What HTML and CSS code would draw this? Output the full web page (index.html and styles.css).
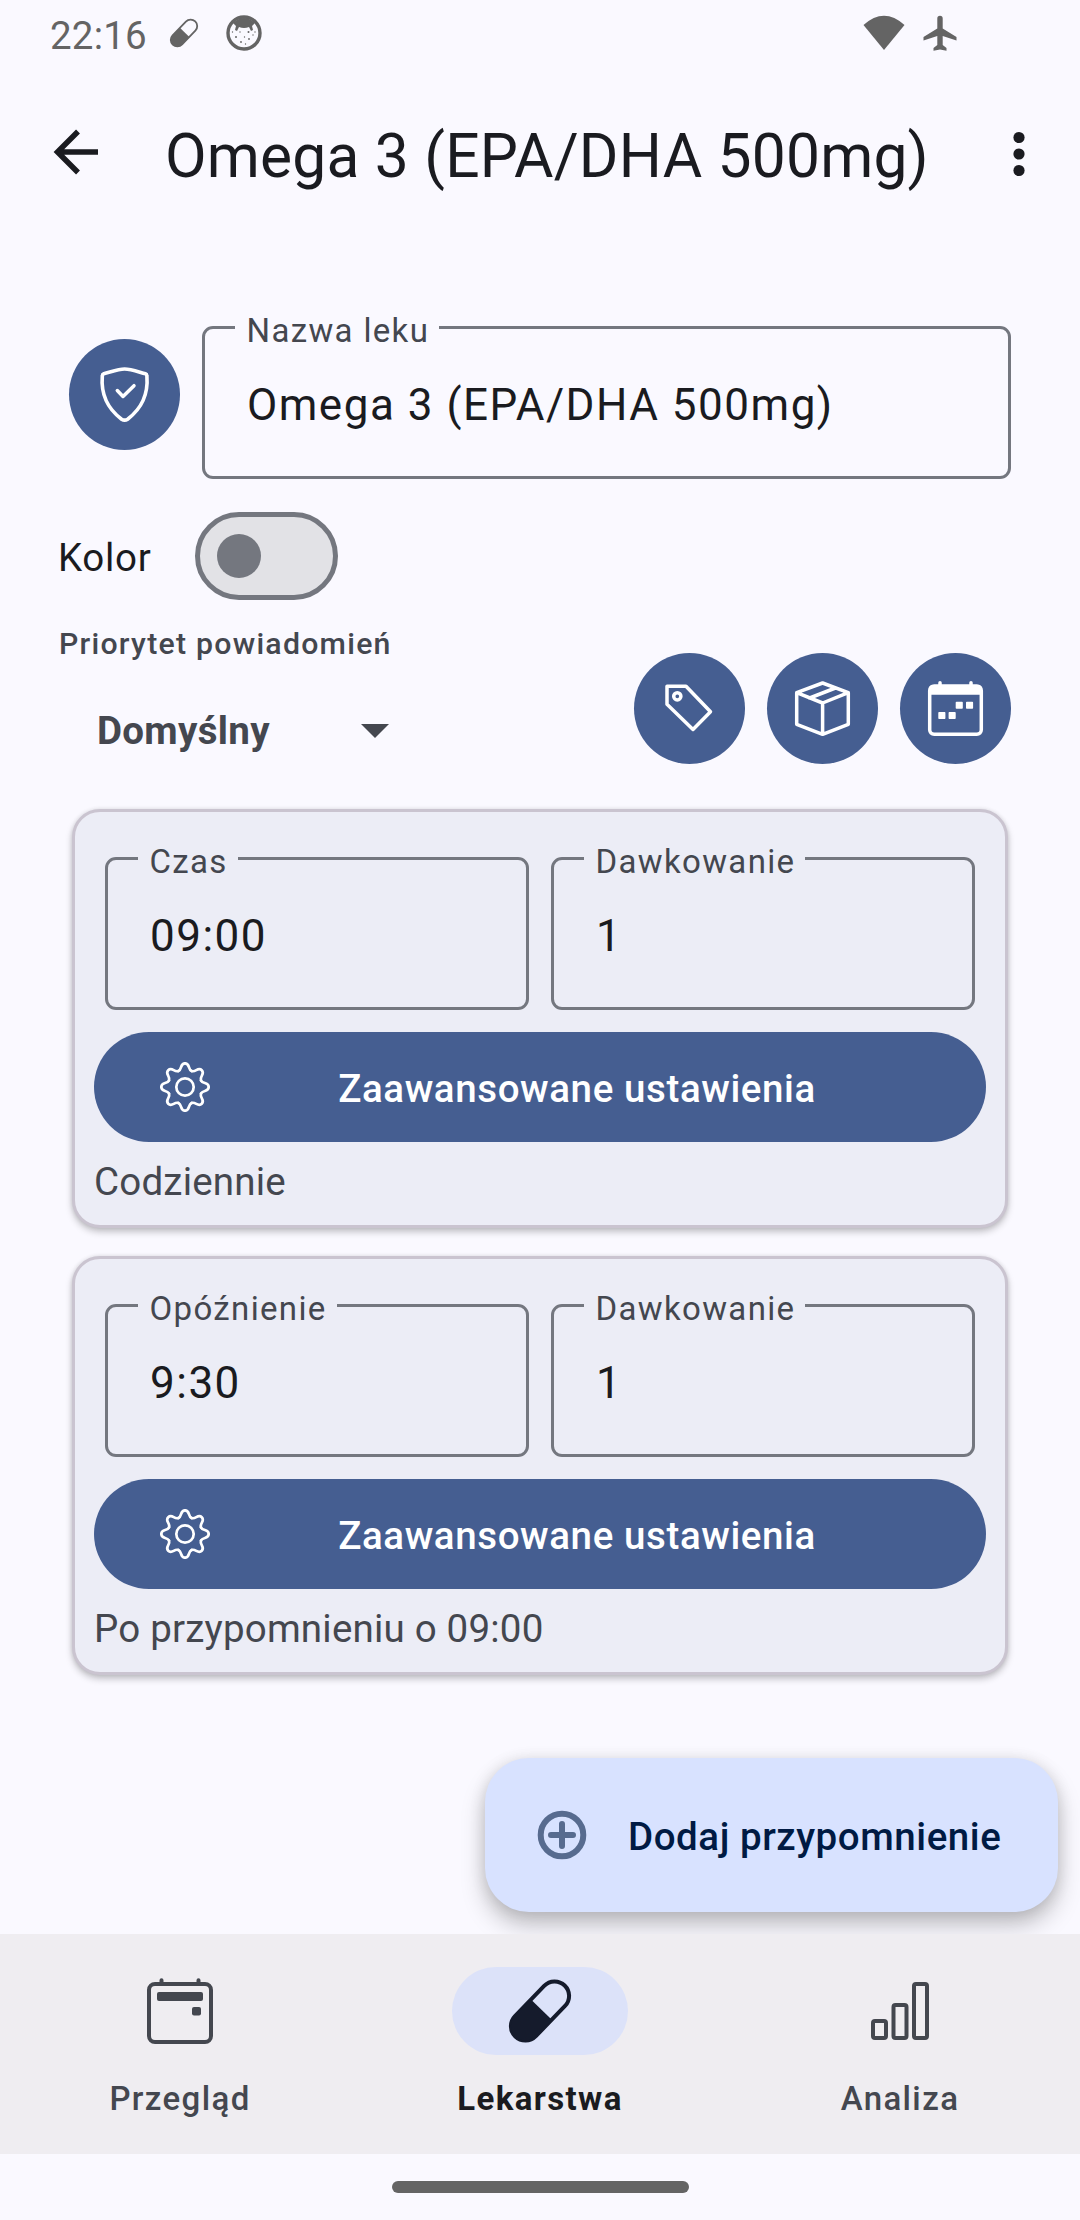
FILE: index.html
```html
<!DOCTYPE html>
<html lang="pl">
<head>
<meta charset="utf-8">
<title>Omega 3 (EPA/DHA 500mg)</title>
<link rel="stylesheet" href="styles.css">
</head>
<body>
<svg class="defs" width="0" height="0" aria-hidden="true">
  <defs>
    <path id="tooth" d="M-6.600-16C-2.700-17.600-5.200-23.700 0-23.700S2.700-17.600 6.600-16"/>
    <symbol id="gear" viewBox="-25 -25 50 50">
      <g fill="none" stroke="currentColor" stroke-width="2.7" stroke-linecap="round">
        <use href="#tooth"/><use href="#tooth" transform="rotate(45)"/>
        <use href="#tooth" transform="rotate(90)"/><use href="#tooth" transform="rotate(135)"/>
        <use href="#tooth" transform="rotate(180)"/><use href="#tooth" transform="rotate(225)"/>
        <use href="#tooth" transform="rotate(270)"/><use href="#tooth" transform="rotate(315)"/>
        <circle r="8.7"/>
      </g>
    </symbol>
    <symbol id="pill" viewBox="-33 -33 66 66">
      <g transform="rotate(-46)">
        <rect x="-35.5" y="-14.5" width="71" height="29" rx="14.5" fill="none" stroke="currentColor" stroke-width="4"/>
        <path d="M2-14.5H-21a14.5 14.5 0 0 0 0 29H2z" fill="currentColor"/>
      </g>
    </symbol>
  </defs>
</svg>

<header class="status">
  <span class="clock">22:16</span>
  <svg class="status-pill" width="30" height="30"><use href="#pill"/></svg>
  <svg class="status-face" width="36" height="36" viewBox="0 0 36 36">
    <circle cx="18" cy="18" r="16" fill="none" stroke="currentColor" stroke-width="3.4"/>
    <path d="M7 8Q18-2 29 8L26 11 27 15 25 16 23 12Q18 14 13 12L11 16 9 15 10 11Z" fill="currentColor"/>
    <g fill="currentColor"><circle cx="10" cy="22" r="1"/><circle cx="14" cy="17" r=".7"/><circle cx="22.500" cy="17" r="1"/><circle cx="15" cy="27" r=".9"/><circle cx="23" cy="24" r=".9"/><circle cx="18.500" cy="22" r=".7"/><circle cx="27" cy="20" r=".7"/><circle cx="19.500" cy="29" r=".7"/><circle cx="6.500" cy="17" r=".7"/><circle cx="29" cy="17" r=".7"/></g>
  </svg>
  <svg class="status-wifi" width="42" height="36" viewBox="0 0 42 36"><path d="M.5 10Q21-8.500 41.500 10L21 35Z" fill="currentColor"/></svg>
  <svg width="34" height="36" viewBox="0 0 34 36"><path d="M14.300 3.500a2.700 2.700 0 0 1 5.400 0V13.500L33.500 22V25.500L19.700 21V30L23.500 33V35.800L17 34.500 10.500 35.800V33L14.300 30V21L.5 25.500V22L14.300 13.500Z" fill="currentColor"/></svg>
</header>

<div class="appbar">
  <svg width="46" height="46" viewBox="0 0 46 46" fill="none" stroke="currentColor" stroke-width="5.500"><path d="M45 23H5M25 2.500 4.500 23 25 43.500"/></svg>
  <h1>Omega 3 (EPA/DHA 500mg)</h1>
  <svg class="more" width="12" height="46" viewBox="0 0 12 46" fill="currentColor"><circle cx="6" cy="6.500" r="5.600"/><circle cx="6" cy="23" r="5.600"/><circle cx="6" cy="39.500" r="5.600"/></svg>
</div>

<main>
  <section class="name-row">
    <button class="round"><svg width="111" height="111" viewBox="0 0 111 111"><path stroke-width="3.600" d="M34.800 34.800C41 33.300 49 30 55.600 30S70.500 33.300 76.500 34.800Q77.800 35.200 77.900 37C79.500 57 72 70 58.600 80.200Q55.600 82.200 52.600 80.200C39 70 31.700 57 33.300 37Q33.400 35.200 34.800 34.800Z"/><path d="M48.300 51.500 54 57.500 65 46.700"/></svg></button>
    <fieldset class="field"><legend>Nazwa leku</legend><div class="value">Omega 3 (EPA/DHA 500mg)</div></fieldset>
  </section>

  <section class="color-row">
    <span class="color-label">Kolor</span>
    <span class="switch"><span class="thumb"></span></span>
  </section>

  <section class="options">
    <div class="priority">
      <div class="priority-label">Priorytet powiadomień</div>
      <div class="select"><span>Domyślny</span><svg width="28" height="14" viewBox="0 0 28 14"><path d="M0 0H28L14 14Z" fill="currentColor"/></svg></div>
    </div>
    <div class="actions">
      <button class="round"><svg width="111" height="111" viewBox="0 0 111 111"><path d="M33 33.300H52L76.500 58.800 59 76.500 33 51.200Z"/><circle cx="43.300" cy="43.300" r="3.600"/></svg></button>
      <button class="round"><svg width="111" height="111" viewBox="0 0 111 111"><path d="M55.600 30 81.300 39.700V71.300L55.600 81.300 29.700 71.300V39.700ZM29.700 39.700 55.600 50 81.300 39.700M55.600 50V81.300M42.700 45 68.400 35"/></svg></button>
      <button class="round"><svg width="111" height="111" viewBox="0 0 111 111"><rect x="29.700" y="33" width="51.600" height="48.300" rx="4.500"/><path class="solid" d="M29 41.700V36Q29 32 33 32H78Q82 32 82 36V41.700ZM56.500 48.700h5.500q.8 0 .8.800v5.500q0 .8-.8.800h-5.500q-.8 0-.8-.8v-5.500q0-.8.8-.8zm10.300 0h5.500q.8 0 .8.800v5.500q0 .8-.8.800h-5.500q-.8 0-.8-.8v-5.500q0-.8.8-.8zM39.100 59h5.500q.8 0 .8.800v5.500q0 .8-.8.800h-5.500q-.8 0-.8-.8v-5.500q0-.8.8-.8zm10.300 0h5.500q.8 0 .8.800v5.500q0 .8-.8.800h-5.500q-.8 0-.8-.8v-5.500q0-.8.8-.8z"/><path d="M40 29.700V34M71 29.700V34"/></svg></button>
    </div>
  </section>

  <section class="cards">
    <article class="card">
      <div class="fields">
        <fieldset class="field"><legend>Czas</legend><div class="value">09:00</div></fieldset>
        <fieldset class="field"><legend>Dawkowanie</legend><div class="value">1</div></fieldset>
      </div>
      <button class="advanced"><svg width="50" height="50"><use href="#gear"/></svg><span>Zaawansowane ustawienia</span></button>
      <p>Codziennie</p>
    </article>
    <article class="card">
      <div class="fields">
        <fieldset class="field"><legend>Opóźnienie</legend><div class="value">9:30</div></fieldset>
        <fieldset class="field"><legend>Dawkowanie</legend><div class="value">1</div></fieldset>
      </div>
      <button class="advanced"><svg width="50" height="50"><use href="#gear"/></svg><span>Zaawansowane ustawienia</span></button>
      <p>Po przypomnieniu o 09:00</p>
    </article>
  </section>

  <button class="fab">
    <svg width="50" height="50" viewBox="0 0 50 50" fill="none" stroke="currentColor" stroke-width="6"><circle cx="25" cy="25" r="21.300"/><path stroke-linecap="round" d="M25 14V36M14 25H36"/></svg>
    <span>Dodaj przypomnienie</span>
  </button>
</main>

<nav>
  <a class="tab"><span class="indicator"><svg width="66" height="66" viewBox="0 0 66 66" fill="none" stroke="currentColor" stroke-width="4"><rect x="2" y="6" width="62" height="58" rx="6"/><path stroke-linecap="round" d="M14.500 2.200V5M51.500 2.200V5"/><g fill="currentColor" stroke="none"><rect x="10" y="14" width="46" height="9" rx="2"/><rect x="45" y="29" width="9" height="8.500" rx="2"/></g></svg></span><span>Przegląd</span></a>
  <a class="tab active"><span class="indicator"><svg width="66" height="66"><use href="#pill"/></svg></span><span>Lekarstwa</span></a>
  <a class="tab"><span class="indicator"><svg width="66" height="66" viewBox="0 0 66 66" fill="none" stroke="currentColor" stroke-width="4"><rect x="6" y="43" width="13" height="17" rx="2"/><rect x="26.500" y="27" width="13" height="33" rx="2"/><rect x="47" y="6" width="13" height="54" rx="2"/></svg></span><span>Analiza</span></a>
</nav>
<footer><span class="home"></span></footer>
</body>
</html>
```

FILE: styles.css
```css
* { box-sizing: border-box; }
body {
  margin: 0;
  width: 1080px;
  height: 2220px;
  display: flex;
  flex-direction: column;
  overflow: hidden;
  background: #faf9ff;
  color: #1a1b20;
  font-family: Roboto, sans-serif;
  font-size: 38.5px;
}
svg { display: block; flex: none; overflow: visible; }
.defs { position: absolute; }
button { border: 0; padding: 0; font: inherit; }

.status {
  height: 70px;
  flex: none;
  display: flex;
  align-items: center;
  padding: 0 123px 4px 50px;
  color: #646464;
}
.clock { width: 119px; padding-top: 5px; letter-spacing: .2px; }
.status-face { margin-left: 27px; }
.status-wifi { margin: 0 18px 0 auto; }

.appbar {
  height: 168px;
  flex: none;
  display: flex;
  align-items: center;
  padding: 0 55px 4px 53px;
}
.appbar h1 {
  margin: 10px 0 0 66px;
  font-size: 60.5px;
  font-weight: 400;
  line-height: 76px;
  letter-spacing: .2px;
  white-space: nowrap;
}
.more { margin: 4px 0 0 auto; }

main {
  position: relative;
  height: 1696px;
  flex: none;
  padding: 88px 69px 0 58px;
}
.name-row {
  display: flex;
  align-items: center;
  gap: 22px;
  height: 153px;
  padding-left: 11px;
}
.name-row .round { margin-top: -16px; }
.round {
  width: 111px;
  height: 111px;
  flex: none;
  border-radius: 50%;
  background: #455e91;
  color: #fff;
}
.round svg {
  fill: none;
  stroke: currentColor;
  stroke-width: 3.5;
  stroke-linecap: round;
  stroke-linejoin: round;
}
.round .solid { fill: currentColor; stroke: none; }

/* The outline is drawn at the middle of the legend, hence the negative margin */
.field {
  flex: 1;
  min-width: 0;
  height: 173px;
  margin: -20px 0 0;
  padding: 0 0 0 30px;
  border: 3px solid #74777f;
  border-radius: 11px;
}
legend {
  height: 43px;
  padding: 7px 10px 0 11.5px;
  color: #44474f;
  font-size: 33px;
  line-height: 36px;
  letter-spacing: 1.35px;
}
.value {
  margin: 30px 0 0 12px;
  font-size: 44px;
  line-height: 52px;
  letter-spacing: 1.5px;
  white-space: nowrap;
}

.color-row {
  display: flex;
  align-items: center;
  height: 88px;
  margin-top: 33px;
}
.color-label { width: 137px; padding-top: 2px; letter-spacing: .7px; }
.switch {
  display: flex;
  align-items: center;
  width: 143px;
  height: 88px;
  padding-left: 16.5px;
  border: 5.5px solid #74777f;
  border-radius: 44px;
  background: #e2e2e6;
}
.thumb { width: 44px; height: 44px; border-radius: 50%; background: #74777f; }

.options { display: flex; justify-content: space-between; height: 209px; }
.priority { padding-top: 22px; color: #44474f; }
.priority-label {
  padding-left: 1px;
  font-size: 30.25px;
  font-weight: 500;
  line-height: 44px;
  letter-spacing: 1.25px;
}
.select {
  display: flex;
  justify-content: space-between;
  align-items: center;
  width: 331px;
  margin-top: 42px;
  padding-left: 39px;
  font-weight: 700;
  line-height: 46px;
  letter-spacing: .3px;
}
.actions { display: flex; gap: 22px; padding-top: 53px; }

.cards { display: flex; flex-direction: column; gap: 28px; margin: 0 3px 0 14px; }
.card {
  height: 419px;
  padding: 45px 19px 0;
  border: 3px solid #cac4d0;
  border-radius: 28px;
  background: #ecedf6;
  box-shadow: 0 4px 7px rgba(0, 0, 0, .22), 0 0 4px rgba(0, 0, 0, .1);
}
.fields { display: flex; gap: 22px; padding: 0 11px; }
.advanced {
  display: flex;
  align-items: center;
  width: 100%;
  height: 110px;
  margin-top: 22px;
  padding: 0 66px;
  border-radius: 55px;
  background: #455e91;
  color: #fff;
  font-weight: 500;
}
.advanced span { flex: 1; text-align: center; padding: 3px 0 0 24px; letter-spacing: .6px; }
.card p { margin: 17px 0 0; line-height: 46px; letter-spacing: .2px; color: #44474f; }

.fab {
  position: absolute;
  right: 22px;
  bottom: 22px;
  width: 573px;
  height: 154px;
  display: flex;
  align-items: center;
  gap: 41px;
  padding-left: 52px;
  border-radius: 44px;
  background: #d8e2ff;
  color: #001a43;
  font-weight: 500;
  letter-spacing: .55px;
  white-space: nowrap;
  box-shadow: 0 14px 24px rgba(0, 0, 0, .22), 0 2px 16px rgba(0, 0, 0, .12);
}
.fab svg { color: #576b8f; }
.fab span { padding-top: 3px; }

nav {
  position: relative;
  display: flex;
  flex: none;
  height: 220px;
  background: #efedf1;
}
.tab {
  flex: 1;
  display: flex;
  flex-direction: column;
  align-items: center;
  gap: 24px;
  padding-top: 33px;
  color: #44474f;
  font-size: 33px;
  font-weight: 500;
  line-height: 40px;
  letter-spacing: 1.375px;
}
.indicator {
  display: flex;
  align-items: center;
  justify-content: center;
  width: 176px;
  height: 88px;
  border-radius: 44px;
}
.active { color: #1a1b20; font-weight: 700; }
.active .indicator { background: #dce2f9; color: #151b2c; }

footer { flex: 1; display: flex; justify-content: center; padding-top: 27px; }
.home { width: 297px; height: 12px; border-radius: 6px; background: #646464; }
```
